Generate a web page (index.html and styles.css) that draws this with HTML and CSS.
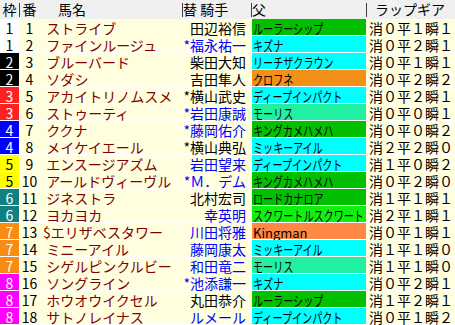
FILE: index.html
```html
<!DOCTYPE html>
<html lang="ja">
<head>
<meta charset="utf-8">
<link rel="stylesheet" href="styles.css">
</head>
<body>
<div class="table">
  <div class="row head">
    <div class="c waku">枠</div>
    <div class="c ban sep">番</div>
    <div class="c name hname">馬名</div>
    <div class="c jockey hjockey sep">替 騎手</div>
    <div class="c sire hsire sep">父</div>
    <div class="c lap hlap sep">ラップギア</div>
  </div>

  <div class="row"><div class="c waku w1">1</div><div class="c ban">1</div><div class="c name"> ストライブ</div><div class="c jockey">田辺裕信</div><div class="c sire s-green"><span>ルーラーシップ</span></div><div class="c lap">消０平１瞬１</div></div>
  <div class="row"><div class="c waku w1">1</div><div class="c ban">2</div><div class="c name"> ファインルージュ</div><div class="c jockey blue">*福永祐一</div><div class="c sire s-cyan"><span>キズナ</span></div><div class="c lap">消０平２瞬１</div></div>
  <div class="row"><div class="c waku w2">2</div><div class="c ban">3</div><div class="c name"> ブルーバード</div><div class="c jockey">柴田大知</div><div class="c sire s-cyan"><span>リーチザクラウン</span></div><div class="c lap">消０平１瞬１</div></div>
  <div class="row"><div class="c waku w2">2</div><div class="c ban">4</div><div class="c name"> ソダシ</div><div class="c jockey">吉田隼人</div><div class="c sire s-orange"><span>クロフネ</span></div><div class="c lap">消０平２瞬２</div></div>
  <div class="row"><div class="c waku w3">3</div><div class="c ban">5</div><div class="c name"> アカイトリノムスメ</div><div class="c jockey">*横山武史</div><div class="c sire s-cyan"><span>ディープインパクト</span></div><div class="c lap">消０平２瞬１</div></div>
  <div class="row"><div class="c waku w3">3</div><div class="c ban">6</div><div class="c name"> ストゥーティ</div><div class="c jockey blue">*岩田康誠</div><div class="c sire s-mint"><span>モーリス</span></div><div class="c lap">消０平０瞬１</div></div>
  <div class="row"><div class="c waku w4">4</div><div class="c ban">7</div><div class="c name"> ククナ</div><div class="c jockey blue">*藤岡佑介</div><div class="c sire s-green"><span>キングカメハメハ</span></div><div class="c lap">消０平０瞬２</div></div>
  <div class="row"><div class="c waku w4">4</div><div class="c ban">8</div><div class="c name"> メイケイエール</div><div class="c jockey">*横山典弘</div><div class="c sire s-cyan"><span>ミッキーアイル</span></div><div class="c lap">消２平２瞬０</div></div>
  <div class="row"><div class="c waku w5">5</div><div class="c ban">9</div><div class="c name"> エンスージアズム</div><div class="c jockey blue">岩田望来</div><div class="c sire s-cyan"><span>ディープインパクト</span></div><div class="c lap">消１平０瞬２</div></div>
  <div class="row"><div class="c waku w5">5</div><div class="c ban">10</div><div class="c name"> アールドヴィーヴル</div><div class="c jockey blue">*Ｍ．デム</div><div class="c sire s-green"><span>キングカメハメハ</span></div><div class="c lap">消０平２瞬０</div></div>
  <div class="row"><div class="c waku w6">6</div><div class="c ban">11</div><div class="c name"> ジネストラ</div><div class="c jockey">北村宏司</div><div class="c sire s-green"><span>ロードカナロア</span></div><div class="c lap">消１平１瞬１</div></div>
  <div class="row"><div class="c waku w6">6</div><div class="c ban">12</div><div class="c name"> ヨカヨカ</div><div class="c jockey blue">幸英明</div><div class="c sire s-lime"><span>スクワートルスクワート</span></div><div class="c lap">消２平１瞬１</div></div>
  <div class="row"><div class="c waku w7">7</div><div class="c ban">13</div><div class="c name">$エリザベスタワー</div><div class="c jockey blue">川田将雅</div><div class="c sire s-coral"><span class="latin">Kingman</span></div><div class="c lap">消０平１瞬１</div></div>
  <div class="row"><div class="c waku w7">7</div><div class="c ban">14</div><div class="c name"> ミニーアイル</div><div class="c jockey blue">藤岡康太</div><div class="c sire s-cyan"><span>ミッキーアイル</span></div><div class="c lap">消１平１瞬０</div></div>
  <div class="row"><div class="c waku w7">7</div><div class="c ban">15</div><div class="c name"> シゲルピンクルビー</div><div class="c jockey blue">和田竜二</div><div class="c sire s-mint"><span>モーリス</span></div><div class="c lap">消１平１瞬０</div></div>
  <div class="row"><div class="c waku w8">8</div><div class="c ban">16</div><div class="c name"> ソングライン</div><div class="c jockey blue">*池添謙一</div><div class="c sire s-cyan"><span>キズナ</span></div><div class="c lap">消０平２瞬１</div></div>
  <div class="row"><div class="c waku w8">8</div><div class="c ban">17</div><div class="c name"> ホウオウイクセル</div><div class="c jockey">丸田恭介</div><div class="c sire s-green"><span>ルーラーシップ</span></div><div class="c lap">消１平２瞬１</div></div>
  <div class="row"><div class="c waku w8">8</div><div class="c ban">18</div><div class="c name"> サトノレイナス</div><div class="c jockey blue">ルメール</div><div class="c sire s-cyan"><span>ディープインパクト</span></div><div class="c lap">消０平１瞬２</div></div>
</div>
</body>
</html>
```

FILE: styles.css
```css
html, body {
  margin: 0;
  padding: 0;
  background: #ffffe0;
}
body {
  font-family: "Noto Sans CJK JP", "DejaVu Sans", sans-serif;
  font-size: 14px;
  color: #000;
}
.table {
  width: 455px;
}
.row {
  display: grid;
  grid-template-columns: 19px 21px 142px 69px 115px 89px;
  height: 17px;
  background: #ffffe0;
}
.row.head {
  height: 19px;
  background: #f0f0f0;
}
.c {
  box-sizing: border-box;
  height: 17px;
  line-height: 16px;
  padding-top: 1px;
  white-space: pre;
  border-bottom: 1px solid #fff;
}
.head .c {
  height: 19px;
  line-height: 19px;
  padding-top: 0;
  border-bottom: none;
}
.head .sep {
  background: linear-gradient(#404040, #404040) no-repeat left 0 top 3px / 1px 14px;
}
.waku {
  text-align: center;
}
.ban {
  text-align: center;
}
.name {
  padding-left: 3px;
  color: #800000;
}
.head .hname {
  padding-left: 18px;
  color: #000;
}
.jockey {
  text-align: right;
  padding-right: 5px;
}
.head .hjockey {
  text-align: left;
  padding-left: 1px;
  padding-right: 0;
}
.blue {
  color: #0000ff;
}
.sire {
  border-left: 1px solid #ffffe0;
  padding-left: 1px;
}
.sire span {
  display: inline-block;
  transform: scaleX(0.72);
  transform-origin: left center;
}
.sire span.latin {
  font-size: 13px;
  transform: none;
}
.head .hsire {
  border-left: none;
  padding-left: 1px;
}
.lap {
  padding-left: 3px;
}
.head .hlap {
  padding-left: 9px;
}

.w1 { background: #ffffff; color: #000; }
.w2 { background: #000000; color: #fff; }
.w3 { background: #ff2020; color: #fff; }
.w4 { background: #0000ff; color: #fff; }
.w5 { background: #ffff00; color: #000; }
.w6 { background: #118080; color: #fff; }
.w7 { background: #f98a12; color: #fff; }
.w8 { background: #ff00ff; color: #fff; }

.s-green { background: #00c000; }
.s-cyan { background: #00ffff; }
.s-orange { background: #f29018; }
.s-mint { background: #20f0a0; }
.s-lime { background: #10f010; }
.s-coral { background: #ff8844; }
```
